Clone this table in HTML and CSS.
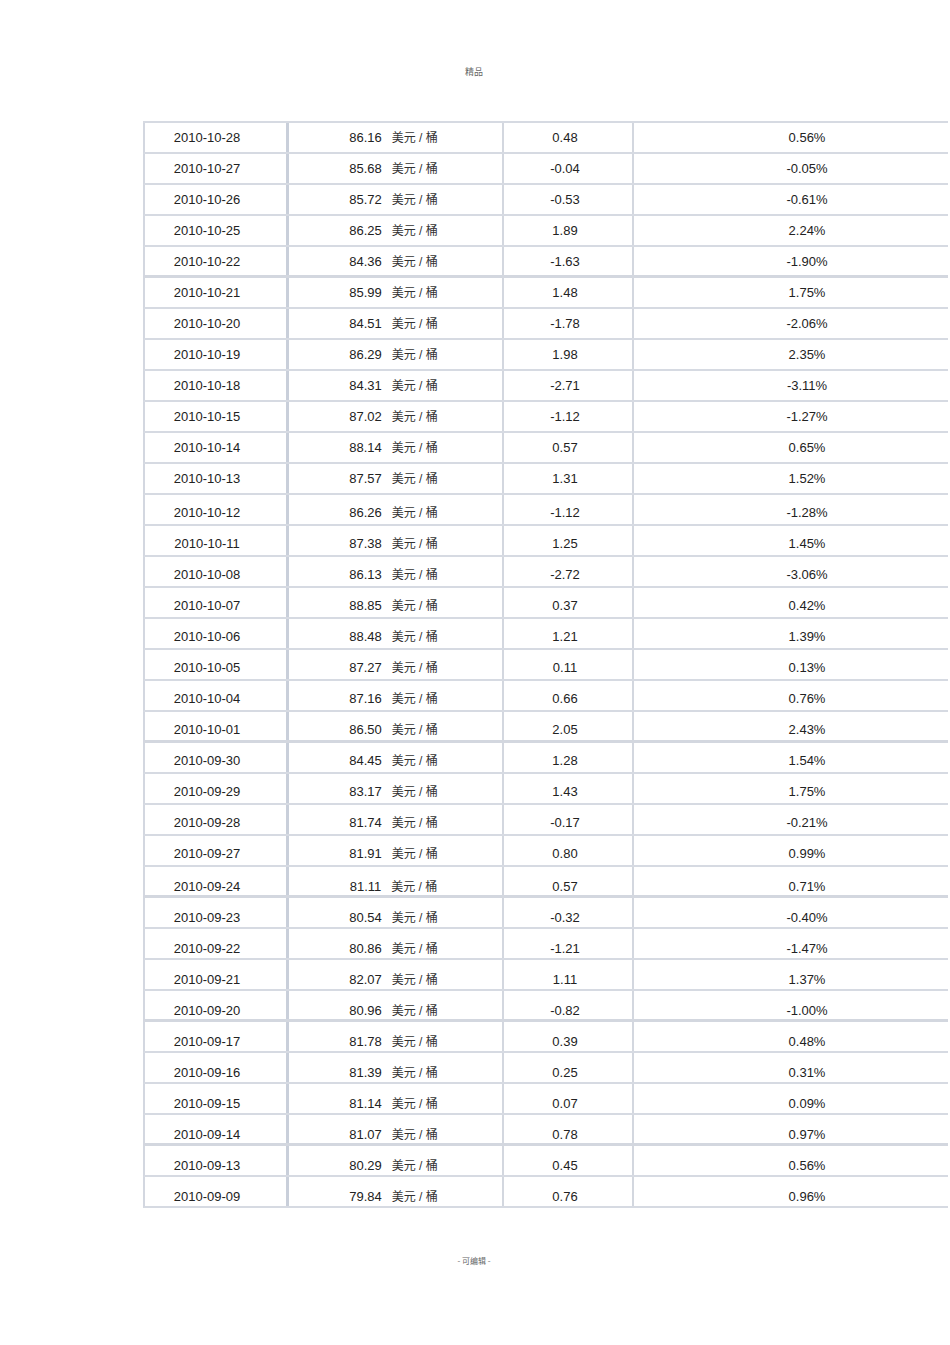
FILE: index.html
```html
<!DOCTYPE html>
<html lang="zh-CN">
<head>
<meta charset="utf-8">
<title>精品</title>
<link rel="stylesheet" href="styles.css">
</head>
<body>
<div class="page">
  <div class="head">精品</div>
  <div class="table">
    <div class="group ga">
      <div class="row"><div class="c1">2010-10-28</div><div class="c2">86.16<span class="unit">美元 / 桶</span></div><div class="c3">0.48</div><div class="c4">0.56%</div></div>
      <div class="row"><div class="c1">2010-10-27</div><div class="c2">85.68<span class="unit">美元 / 桶</span></div><div class="c3">-0.04</div><div class="c4">-0.05%</div></div>
      <div class="row"><div class="c1">2010-10-26</div><div class="c2">85.72<span class="unit">美元 / 桶</span></div><div class="c3">-0.53</div><div class="c4">-0.61%</div></div>
      <div class="row"><div class="c1">2010-10-25</div><div class="c2">86.25<span class="unit">美元 / 桶</span></div><div class="c3">1.89</div><div class="c4">2.24%</div></div>
      <div class="row thick"><div class="c1">2010-10-22</div><div class="c2">84.36<span class="unit">美元 / 桶</span></div><div class="c3">-1.63</div><div class="c4">-1.90%</div></div>
      <div class="row"><div class="c1">2010-10-21</div><div class="c2">85.99<span class="unit">美元 / 桶</span></div><div class="c3">1.48</div><div class="c4">1.75%</div></div>
      <div class="row"><div class="c1">2010-10-20</div><div class="c2">84.51<span class="unit">美元 / 桶</span></div><div class="c3">-1.78</div><div class="c4">-2.06%</div></div>
      <div class="row"><div class="c1">2010-10-19</div><div class="c2">86.29<span class="unit">美元 / 桶</span></div><div class="c3">1.98</div><div class="c4">2.35%</div></div>
      <div class="row"><div class="c1">2010-10-18</div><div class="c2">84.31<span class="unit">美元 / 桶</span></div><div class="c3">-2.71</div><div class="c4">-3.11%</div></div>
      <div class="row"><div class="c1">2010-10-15</div><div class="c2">87.02<span class="unit">美元 / 桶</span></div><div class="c3">-1.12</div><div class="c4">-1.27%</div></div>
      <div class="row"><div class="c1">2010-10-14</div><div class="c2">88.14<span class="unit">美元 / 桶</span></div><div class="c3">0.57</div><div class="c4">0.65%</div></div>
      <div class="row"><div class="c1">2010-10-13</div><div class="c2">87.57<span class="unit">美元 / 桶</span></div><div class="c3">1.31</div><div class="c4">1.52%</div></div>
    </div>
    <div class="group gb">
      <div class="row"><div class="c1">2010-10-12</div><div class="c2">86.26<span class="unit">美元 / 桶</span></div><div class="c3">-1.12</div><div class="c4">-1.28%</div></div>
      <div class="row"><div class="c1">2010-10-11</div><div class="c2">87.38<span class="unit">美元 / 桶</span></div><div class="c3">1.25</div><div class="c4">1.45%</div></div>
      <div class="row"><div class="c1">2010-10-08</div><div class="c2">86.13<span class="unit">美元 / 桶</span></div><div class="c3">-2.72</div><div class="c4">-3.06%</div></div>
      <div class="row"><div class="c1">2010-10-07</div><div class="c2">88.85<span class="unit">美元 / 桶</span></div><div class="c3">0.37</div><div class="c4">0.42%</div></div>
      <div class="row"><div class="c1">2010-10-06</div><div class="c2">88.48<span class="unit">美元 / 桶</span></div><div class="c3">1.21</div><div class="c4">1.39%</div></div>
      <div class="row"><div class="c1">2010-10-05</div><div class="c2">87.27<span class="unit">美元 / 桶</span></div><div class="c3">0.11</div><div class="c4">0.13%</div></div>
      <div class="row"><div class="c1">2010-10-04</div><div class="c2">87.16<span class="unit">美元 / 桶</span></div><div class="c3">0.66</div><div class="c4">0.76%</div></div>
      <div class="row thick"><div class="c1">2010-10-01</div><div class="c2">86.50<span class="unit">美元 / 桶</span></div><div class="c3">2.05</div><div class="c4">2.43%</div></div>
      <div class="row"><div class="c1">2010-09-30</div><div class="c2">84.45<span class="unit">美元 / 桶</span></div><div class="c3">1.28</div><div class="c4">1.54%</div></div>
      <div class="row"><div class="c1">2010-09-29</div><div class="c2">83.17<span class="unit">美元 / 桶</span></div><div class="c3">1.43</div><div class="c4">1.75%</div></div>
      <div class="row"><div class="c1">2010-09-28</div><div class="c2">81.74<span class="unit">美元 / 桶</span></div><div class="c3">-0.17</div><div class="c4">-0.21%</div></div>
      <div class="row"><div class="c1">2010-09-27</div><div class="c2">81.91<span class="unit">美元 / 桶</span></div><div class="c3">0.80</div><div class="c4">0.99%</div></div>
    </div>
    <div class="group gc">
      <div class="row thick"><div class="c1">2010-09-24</div><div class="c2">81.11<span class="unit">美元 / 桶</span></div><div class="c3">0.57</div><div class="c4">0.71%</div></div>
      <div class="row"><div class="c1">2010-09-23</div><div class="c2">80.54<span class="unit">美元 / 桶</span></div><div class="c3">-0.32</div><div class="c4">-0.40%</div></div>
      <div class="row"><div class="c1">2010-09-22</div><div class="c2">80.86<span class="unit">美元 / 桶</span></div><div class="c3">-1.21</div><div class="c4">-1.47%</div></div>
      <div class="row"><div class="c1">2010-09-21</div><div class="c2">82.07<span class="unit">美元 / 桶</span></div><div class="c3">1.11</div><div class="c4">1.37%</div></div>
      <div class="row thick"><div class="c1">2010-09-20</div><div class="c2">80.96<span class="unit">美元 / 桶</span></div><div class="c3">-0.82</div><div class="c4">-1.00%</div></div>
      <div class="row"><div class="c1">2010-09-17</div><div class="c2">81.78<span class="unit">美元 / 桶</span></div><div class="c3">0.39</div><div class="c4">0.48%</div></div>
      <div class="row"><div class="c1">2010-09-16</div><div class="c2">81.39<span class="unit">美元 / 桶</span></div><div class="c3">0.25</div><div class="c4">0.31%</div></div>
      <div class="row"><div class="c1">2010-09-15</div><div class="c2">81.14<span class="unit">美元 / 桶</span></div><div class="c3">0.07</div><div class="c4">0.09%</div></div>
      <div class="row thick"><div class="c1">2010-09-14</div><div class="c2">81.07<span class="unit">美元 / 桶</span></div><div class="c3">0.78</div><div class="c4">0.97%</div></div>
      <div class="row"><div class="c1">2010-09-13</div><div class="c2">80.29<span class="unit">美元 / 桶</span></div><div class="c3">0.45</div><div class="c4">0.56%</div></div>
      <div class="row"><div class="c1">2010-09-09</div><div class="c2">79.84<span class="unit">美元 / 桶</span></div><div class="c3">0.76</div><div class="c4">0.96%</div></div>
    </div>
  </div>
  <div class="foot">- 可编辑 -</div>
</div>
</body>
</html>
```

FILE: styles.css
```css
html, body {
  margin: 0;
  padding: 0;
  background: #ffffff;
}

body {
  overflow: hidden;
  font-family: "Liberation Sans", Arial, "Noto Sans CJK SC", sans-serif;
  color: #222222;
}

.page {
  width: 948px;
  overflow: hidden;
}

.head {
  margin-top: 66px;
  height: 12px;
  line-height: 12px;
  font-size: 9px;
  text-align: center;
  color: #666666;
  font-family: "Noto Sans CJK SC", sans-serif;
}

.table {
  margin-top: 43px;
  margin-left: 143px;
  width: 837px;
  border-top: 2px solid #d6dae2;
}

.row {
  display: flex;
  height: 29px;
  border-bottom: 2px solid #d6dae2;
  border-left: 2px solid #d3d7e0;
  font-size: 13px;
  line-height: 15px;
}

.row.thick {
  height: 28px;
  border-bottom: 3px solid #d3d7df;
}

.ga .row > div { padding-top: 7px; }
.gb .row > div { padding-top: 10px; }
.gc .row > div { padding-top: 12px; }

.row > div {
  box-sizing: border-box;
  text-align: center;
  white-space: nowrap;
}

.c1 {
  width: 144px;
  padding-right: 17px;
  border-right: 3px solid #c9cfda;
}

.c2 {
  width: 215px;
  padding-right: 4px;
  border-right: 2px solid #d3d7df;
}

.c3 {
  width: 130px;
  padding-right: 6px;
  border-right: 2px solid #d3d7df;
}

.c4 {
  width: 346px;
}

.unit {
  margin-left: 10px;
  font-size: 12px;
  color: #333333;
  font-family: "Liberation Sans", "Noto Sans CJK SC", sans-serif;
}

.foot {
  margin-top: 48px;
  height: 10px;
  line-height: 10px;
  font-size: 8px;
  text-align: center;
  color: #666666;
  font-family: "Noto Sans CJK SC", sans-serif;
}
```
